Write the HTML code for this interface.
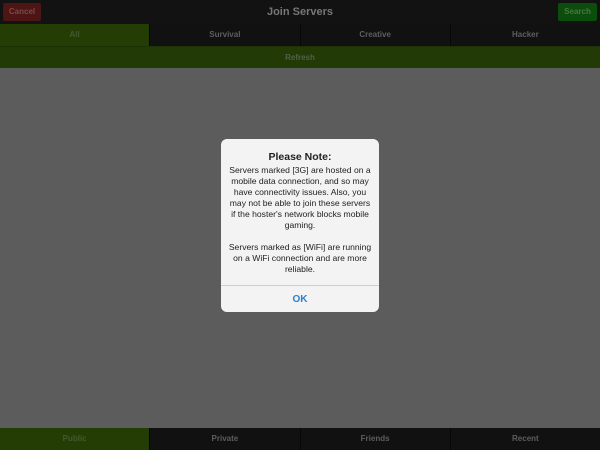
<!DOCTYPE html>
<html><head><meta charset="utf-8"><style>
*{margin:0;padding:0;box-sizing:border-box}
body{width:600px;height:450px;overflow:hidden;background:#5c5c5c;font-family:"Liberation Sans",sans-serif;position:relative}
.abs{position:absolute}
.top{left:0;top:0;width:600px;height:24px;background:#121212}
.title{left:0;top:0;width:600px;height:24px;line-height:24px;text-align:center;color:#777;font-size:11px;font-weight:bold}
.btn{top:3px;height:18px;line-height:18px;font-size:8px;font-weight:bold;text-align:center;border-radius:2px}
.tabs{left:0;width:600px;height:22px;display:flex;background:#111}
.tabs div{flex:1;text-align:center;line-height:22px;font-size:8px;font-weight:bold;color:#5e5e5e;border-left:1px solid #070707}
.tabs div:first-child{border-left:none}
.tabs .on{background:#243d05;color:#425a30}
.refresh{left:0;top:46px;width:600px;height:22px;background:#223a05;color:#52604a;font-size:8px;font-weight:bold;text-align:center;line-height:22px;border-top:1px solid #1c3204}
.dlg{left:221px;top:139px;width:158px;height:173px;background:#f3f3f3;border-radius:6px;text-align:center;color:#222}
.dlg h1{font-size:10.5px;font-weight:bold;margin-top:12px;line-height:12px}
.dlg p{font-size:8.6px;line-height:11px;white-space:nowrap}
.ok{position:absolute;left:0;bottom:0;width:100%;height:27px;border-top:1px solid #cfcfcf;color:#2b7fd0;font-size:10px;font-weight:bold;line-height:27px}
</style></head><body>
<div class="abs top"></div>
<div class="abs title">Join Servers</div>
<div class="abs btn" style="left:3px;width:38px;background:#4e1515;color:#7a4a4a">Cancel</div>
<div class="abs btn" style="left:558px;width:39px;background:#0c4c0c;color:#427a42">Search</div>
<div class="abs tabs" style="top:24px"><div class="on">All</div><div>Survival</div><div>Creative</div><div>Hacker</div></div>
<div class="abs refresh">Refresh</div>
<div class="abs dlg">
<h1>Please Note:</h1>
<p style="margin-top:2px">Servers marked [3G] are hosted on a<br>mobile data connection, and so may<br>have connectivity issues. Also, you<br>may not be able to join these servers<br>if the hoster's network blocks mobile<br>gaming.</p>
<p style="margin-top:11px">Servers marked as [WiFi] are running<br>on a WiFi connection and are more<br>reliable.</p>
<div class="ok">OK</div>
</div>
<div class="abs tabs" style="top:428px;height:22px"><div class="on">Public</div><div>Private</div><div>Friends</div><div>Recent</div></div>
</body></html>
